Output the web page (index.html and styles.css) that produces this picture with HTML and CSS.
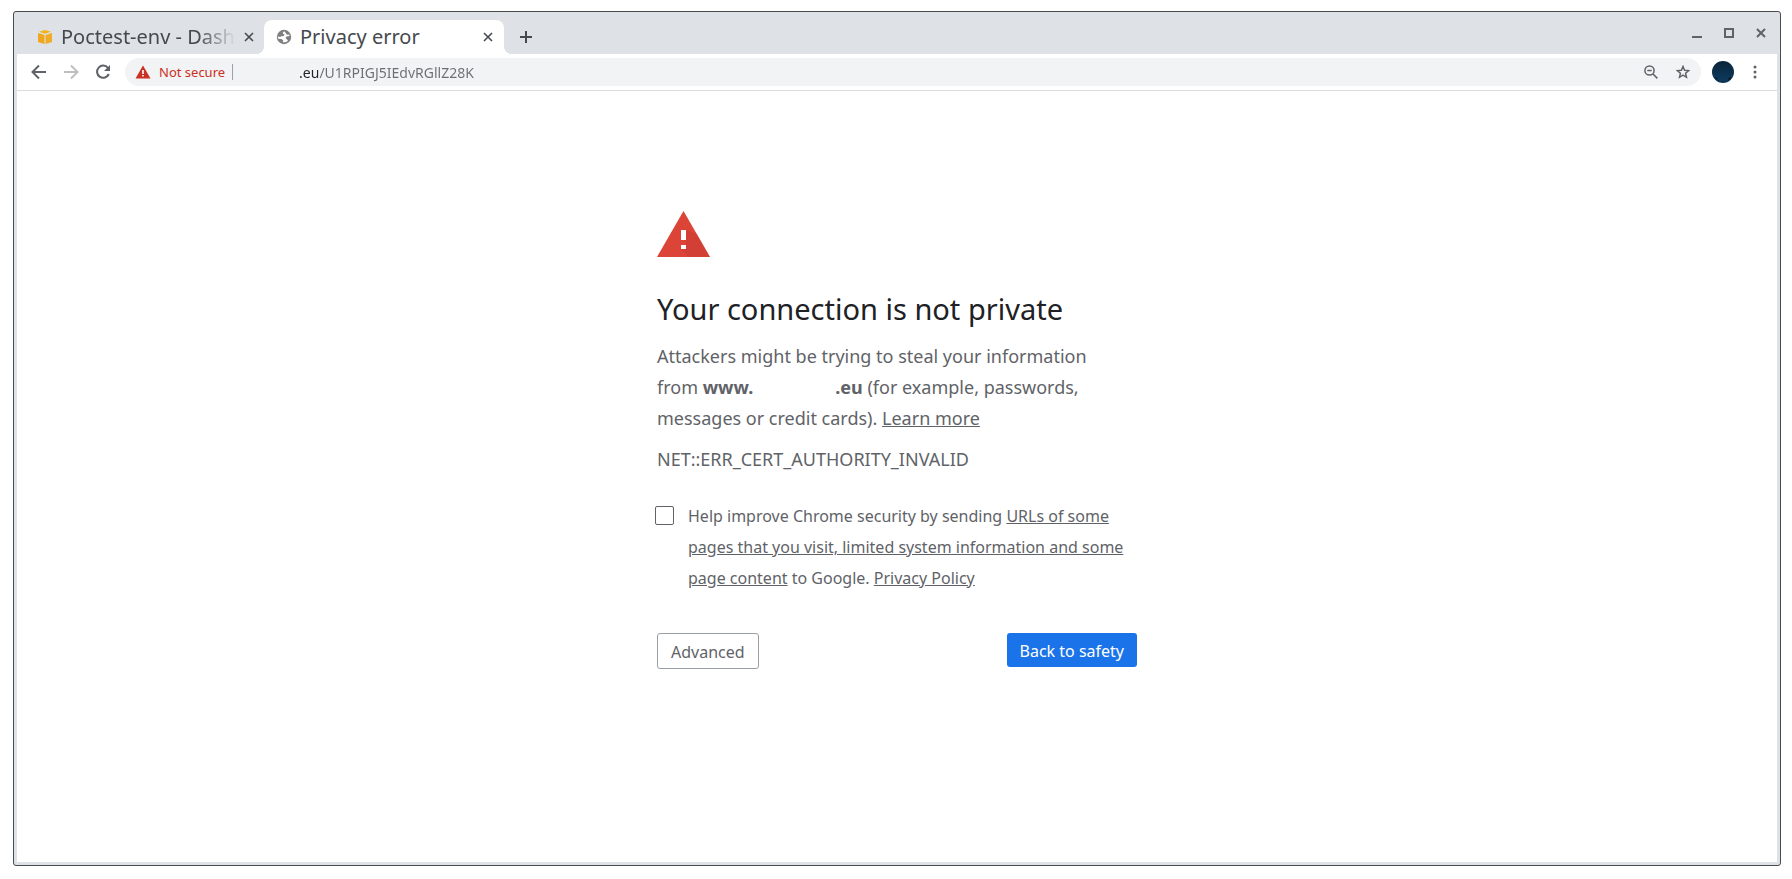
FILE: index.html
```html
<!DOCTYPE html>
<html lang="en">
<head>
    <meta charset="UTF-8">
    <meta name="viewport" content="width=device-width, initial-scale=1.0">
    <title>Privacy error</title>
    <link rel="stylesheet" href="styles.css">
</head>
<body>
    <div class="window">
        <header class="tab-strip">
            <div class="tab">
                <svg class="favicon" width="16" height="16" viewBox="0 0 16 16">
                    <path fill="#f6b21b" d="M8 1l6 1.800-6 2-6-2z"/>
                    <path fill="#f0a71f" d="M1 4l6.500 2v9L1 13z"/>
                    <path fill="#f0ab27" d="M15 4L8.500 6v9l6.500-2z"/>
                </svg>
                <span class="tab-title fade">Poctest-env - Dash</span>
                <button class="tab-close" aria-label="Close tab">
                    <svg width="10" height="10" viewBox="0 0 10 10"><path d="M1 1l8 8M9 1L1 9"/></svg>
                </button>
            </div>
            <div class="tab active">
                <svg class="favicon" width="16" height="16" viewBox="0 0 16 16">
                    <circle cx="8" cy="8" r="7.200" fill="#808080"/>
                    <path fill="#fff" d="M8.500 2.200C6.800 3 6.500 4 7 5l1.500.500-.500 1.500-2.500.300L4 8l-2.200-.500c0 1 .2 1.600.600 2.200l3 .300 2 1.500-.700 1.500c2 .600 4.300.100 5.300-1.200L11 10.500 9.500 9l1-1.500 3-.5-.2-1.500-2.300.200-1-1.200z"/>
                </svg>
                <span class="tab-title">Privacy error</span>
                <button class="tab-close" aria-label="Close tab">
                    <svg width="10" height="10" viewBox="0 0 10 10"><path d="M1 1l8 8M9 1L1 9"/></svg>
                </button>
            </div>
            <button class="new-tab" aria-label="New tab">
                <svg width="12" height="12" viewBox="0 0 12 12"><path d="M6 0v12M0 6h12"/></svg>
            </button>
            <div class="window-buttons">
                <button aria-label="Minimize"><svg width="10" height="10" viewBox="0 0 10 10"><path d="M0 9h10"/></svg></button>
                <button aria-label="Maximize"><svg width="10" height="10" viewBox="0 0 10 10"><path d="M1 1h8v8H1z"/></svg></button>
                <button aria-label="Close"><svg width="10" height="10" viewBox="0 0 10 10"><path d="M1 1l8 8M9 1L1 9"/></svg></button>
            </div>
        </header>

        <nav class="toolbar">
            <button aria-label="Back">
                <svg width="16" height="16" viewBox="0 0 16 16"><path d="M15 8H2M8 1.500L1.500 8 8 14.500"/></svg>
            </button>
            <button class="disabled" aria-label="Forward" disabled>
                <svg width="16" height="16" viewBox="0 0 16 16"><path d="M1 8h13M8 1.500L14.500 8 8 14.500"/></svg>
            </button>
            <button aria-label="Reload">
                <svg width="16" height="16" viewBox="0 0 16 16"><path d="M13 4A6.100 6.100 0 1 0 13.800 10"/><path class="solid" d="M15 1v6H9z"/></svg>
            </button>
            <div class="omnibox">
                <svg class="warning-small" width="16" height="14" viewBox="0 0 16 14">
                    <path fill="#cb3024" d="M8 .500L15.500 13.500H.500z"/>
                    <path fill="#fff" d="M7.200 5h1.600v4H7.200zM7.200 10h1.600v1.600H7.200z"/>
                </svg>
                <label class="security" for="address">Not secure</label>
                <input class="address" id="address" type="text" value=".eu/U1RPIGJ5IEdvRGllZ28K" spellcheck="false">
                <button aria-label="Zoom">
                    <svg width="14" height="14" viewBox="0 0 14 14"><g class="thin"><circle cx="5.500" cy="5.500" r="4.600"/><path d="M3.300 5.500h4.400M9 9l4.400 4.400"/></g></svg>
                </button>
                <button aria-label="Bookmark this page">
                    <svg width="14" height="14" viewBox="0 0 14 14"><path class="thin" d="M7 1.500l1.600 3.800 4.100.300-3.100 2.700.900 4L7 10.200l-3.500 2.100.900-4-3.100-2.700 4.100-.300z"/></svg>
                </button>
            </div>
            <button class="avatar" aria-label="Profile">
                <svg width="22" height="22" viewBox="0 0 22 22">
                    <defs><linearGradient id="sky" x2="0" y2="1"><stop stop-color="#0b2438"/><stop offset="1" stop-color="#0d3c62"/></linearGradient></defs>
                    <circle cx="11" cy="11" r="11" fill="url(#sky)"/>
                    <path fill="#06111c" d="M3 16l2 1 1 3 5 .500 5-.500 1-3 1-1 1 1.500c-3 4-13 5-16-1.500z"/>
                </svg>
            </button>
            <button class="menu" aria-label="Menu">
                <svg width="4" height="14" viewBox="0 0 4 14"><g class="solid"><circle cx="2" cy="2" r="1.500"/><circle cx="2" cy="7" r="1.500"/><circle cx="2" cy="12" r="1.500"/></g></svg>
            </button>
        </nav>

        <main class="interstitial">
            <svg class="warning" width="53" height="46" viewBox="0 0 53 46">
                <path fill="#db4437" d="M26.500 0L53 46H0z"/>
                <path fill="#c53d32" opacity=".4" d="M29 19l11 4 13 23H32l-8-8 5-1z"/>
                <path fill="#fff" d="M24 19h5v10h-5zM24 34h5v4h-5z"/>
            </svg>
            <h1>Your connection is not private</h1>
            <p class="message">Attackers might be trying to steal your information<br>
                from <strong>www.<span class="domain"></span>.eu</strong> (for example, passwords,<br>
                messages or credit cards). <a href="#">Learn more</a></p>
            <p class="error-code">NET::ERR_CERT_AUTHORITY_INVALID</p>
            <div class="opt-in">
                <input type="checkbox" id="opt-in">
                <label for="opt-in">Help improve Chrome security by sending <a href="#">URLs of some<br>
                    pages that you visit, limited system information and some<br>
                    page content</a> to Google. <a href="#">Privacy Policy</a></label>
            </div>
            <div class="actions">
                <button class="secondary">Advanced</button>
                <button class="primary">Back to safety</button>
            </div>
        </main>
    </div>
</body>
</html>
```

FILE: styles.css
```css
* {
    margin: 0;
    padding: 0;
    box-sizing: border-box;
}
body {
    min-height: 100vh;
    display: flex;
    padding: 11px 11px 13px 13px;
    font-family: "Noto Sans", sans-serif;
    background-color: #fff;
    color: #5f6368;
}
button {
    border: none;
    background: none;
    font: inherit;
    color: inherit;
    cursor: pointer;
}
svg {
    display: block;
    flex: none;
    fill: none;
    stroke: none;
}
a {
    color: inherit;
}
.window {
    flex: 1;
    min-width: 0;
    display: flex;
    flex-direction: column;
    border: 1px solid #4a4b4d;
    border-radius: 3px;
    background-color: #dee1e6;
    padding: 0 3px 3px;
}
.tab-strip {
    display: flex;
    height: 42px;
    padding: 8px 0 0 7px;
}
.tab {
    position: relative;
    display: flex;
    align-items: center;
    width: 240px;
    height: 34px;
    padding: 0 10px 0 13px;
    color: #45494d;
}
.tab.active {
    padding: 0 11px 0 12px;
    background-color: #fff;
    border-radius: 8px 8px 0 0;
}
.tab.active::before,
.tab.active::after {
    content: "";
    position: absolute;
    bottom: 0;
    width: 8px;
    height: 8px;
}
.tab.active::before {
    left: -8px;
    background: radial-gradient(circle at 0 0, transparent 8px, #fff 8px);
}
.tab.active::after {
    right: -8px;
    background: radial-gradient(circle at 100% 0, transparent 8px, #fff 8px);
}
.tab-title {
    flex: 1;
    min-width: 0;
    margin: 0 8px;
    font-size: 20px;
    line-height: 28px;
    white-space: nowrap;
    overflow: hidden;
}
.fade {
    mask-image: linear-gradient(to right, #000 78%, transparent);
}
.tab-close svg,
.new-tab svg,
.window-buttons svg {
    stroke: #45494d;
    stroke-width: 2;
}
.tab-close svg {
    stroke-width: 1.6;
}
.new-tab {
    padding: 0 16px;
}
.window-buttons {
    display: flex;
    gap: 22px;
    margin-left: auto;
    padding-right: 11px;
    height: 26px;
}
.window-buttons svg {
    stroke: #5f6368;
}
.toolbar {
    display: flex;
    align-items: center;
    height: 37px;
    padding: 0 20px 0 14px;
    gap: 16px;
    background-color: #fff;
    border-bottom: 1px solid #dadce0;
}
.toolbar svg {
    stroke: #5f6368;
    stroke-width: 2;
}
.toolbar .disabled svg {
    stroke: #bdbfc1;
}
.toolbar .solid {
    fill: #5f6368;
    stroke: none;
}
.toolbar .thin {
    stroke-width: 1.5;
}
.toolbar .warning-small,
.toolbar .avatar svg {
    stroke: none;
}
.omnibox {
    flex: 1;
    display: flex;
    align-items: center;
    gap: 18px;
    height: 28px;
    margin: 0 -5px 0 -2px;
    padding: 0 11px 0 10px;
    border-radius: 14px;
    background-color: #f1f3f4;
    font-size: 14px;
}
.security {
    margin-left: -10px;
    padding-right: 7px;
    font-size: 13px;
    line-height: 16px;
    color: #cb3024;
    border-right: 1px solid #9aa0a6;
}
.address {
    flex: 1;
    min-width: 0;
    margin-left: 48px;
    border: none;
    outline: none;
    font: inherit;
    color: transparent;
    /* host dark, path grey */
    background: linear-gradient(to right, #202124 19px, #6b6f73 19px);
    background-clip: text;
}
.menu {
    margin-left: 3px;
}
.interstitial {
    flex: 1;
    padding: 120px calc(50% - 240px) 40px;
    background-color: #fff;
    font-size: 16px;
}
h1 {
    margin-top: 32px;
    font-size: 29px;
    font-weight: normal;
    line-height: 40px;
    color: #202124;
}
.message {
    margin-top: 12px;
    font-size: 18px;
    line-height: 31px;
    white-space: nowrap;
}
.domain {
    display: inline-block;
    width: 82px;
}
.error-code {
    margin-top: 13px;
    font-size: 18px;
    line-height: 24px;
}
.opt-in {
    display: flex;
    gap: 14px;
    margin: 30px 0 0 -2px;
    line-height: 31px;
    white-space: nowrap;
}
.opt-in input {
    appearance: none;
    flex: none;
    width: 19px;
    height: 19px;
    margin-top: 5px;
    border: 1px solid #5f6368;
    border-radius: 2px;
}
.actions {
    display: flex;
    justify-content: space-between;
    align-items: flex-start;
    margin-top: 39px;
}
.actions button {
    height: 34px;
    padding: 2px 13px 0;
    border-radius: 3px;
}
.actions .secondary {
    height: 36px;
    border: 1px solid #9aa0a6;
}
.actions .primary {
    background-color: #1a73e8;
    color: #fff;
}
```
